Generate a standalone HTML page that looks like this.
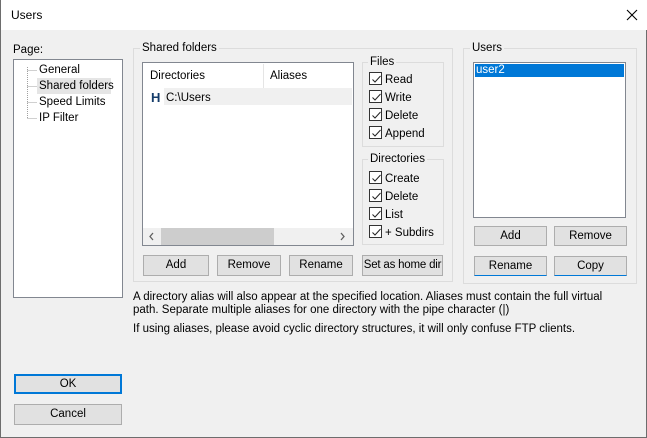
<!DOCTYPE html>
<html><head><style>
*{box-sizing:border-box}
body{margin:0;width:647px;height:438px;overflow:hidden;font-family:"Liberation Sans",sans-serif;font-size:11.5px;color:#000}
#w{position:absolute;left:0;top:0;width:647px;height:438px;background:#f0f0f0;border:1px solid #6d6d6d;border-top:none}
.a{position:absolute;white-space:nowrap}
.t{line-height:14px}
.btn{position:absolute;background:#e1e1e1;border:1px solid #adadad;text-align:center;line-height:19px;white-space:nowrap;overflow:hidden}
.grp{position:absolute;border:1px solid #dcdcdc}
.lbl{position:absolute;background:#f0f0f0;padding:0 2px;line-height:13px}
.cb{position:absolute;width:13px;height:13px;border:1px solid #333;background:#fff}
.cb svg{position:absolute;left:1px;top:1px}
</style></head><body>
<div id="w">
<div class="a" style="left:0;top:0;width:647px;height:30px;background:#fff"></div>
<div class="a t" style="left:10px;top:8px;font-size:12px">Users</div>
<svg class="a" style="left:625px;top:9px" width="12" height="12"><path d="M1 1L11 11M11 1L1 11" stroke="#000" stroke-width="1.1"/></svg>

<div class="a t" style="left:12px;top:43px">Page:</div>
<div class="a" style="left:12px;top:59px;width:110px;height:239px;background:#fff;border:1px solid #828790"></div>
<svg class="a" style="left:26px;top:67px" width="12" height="56"><path d="M0.5 0V51.5M0.5 3.5H10M0.5 19.5H10M0.5 35.5H10M0.5 51.5H10" stroke="#a0a0a0" stroke-dasharray="1 1"/></svg>
<div class="a" style="left:36px;top:78px;width:74px;height:16px;background:#e5e5e5"></div>
<div class="a t" style="left:38px;top:63px">General</div>
<div class="a t" style="left:38px;top:79px">Shared folders</div>
<div class="a t" style="left:38px;top:95px">Speed Limits</div>
<div class="a t" style="left:38px;top:111px">IP Filter</div>

<div class="grp" style="left:132px;top:48px;width:320px;height:234px"></div>
<div class="lbl" style="left:139px;top:42px">Shared folders</div>
<div class="a" style="left:141px;top:62px;width:212px;height:184px;background:#fff;border:1px solid #828790"></div>
<div class="a" style="left:262px;top:64px;width:1px;height:24px;background:#e5e5e5"></div>
<div class="a t" style="left:149px;top:69px">Directories</div>
<div class="a t" style="left:269px;top:69px">Aliases</div>
<div class="a" style="left:163px;top:88px;width:188px;height:17px;background:#f0f0f0"></div>
<div class="a" style="left:150px;top:90px;font-weight:bold;font-size:13px;color:#143c6a;line-height:15px">H</div>
<div class="a t" style="left:165px;top:91px">C:\Users</div>
<div class="a" style="left:142px;top:228px;width:210px;height:17px;background:#f0f0f0"></div>
<div class="a" style="left:160px;top:228px;width:113px;height:17px;background:#cdcdcd"></div>
<svg class="a" style="left:147px;top:232px" width="8" height="9"><path d="M5 1L2 4.5L5 8" stroke="#606060" stroke-width="1.3" fill="none"/></svg>
<svg class="a" style="left:338px;top:232px" width="8" height="9"><path d="M2 1L5 4.5L2 8" stroke="#606060" stroke-width="1.3" fill="none"/></svg>

<div class="btn" style="left:142px;top:255px;width:66px;height:21px">Add</div>
<div class="btn" style="left:216px;top:255px;width:64px;height:21px">Remove</div>
<div class="btn" style="left:288px;top:255px;width:64px;height:21px">Rename</div>
<div class="btn" style="left:361px;top:255px;width:81px;height:21px;letter-spacing:-0.2px">Set as home dir</div>

<div class="grp" style="left:361px;top:62px;width:82px;height:85px"></div>
<div class="lbl" style="left:367px;top:56px">Files</div>
<div class="grp" style="left:361px;top:159px;width:82px;height:86px"></div>
<div class="lbl" style="left:367px;top:153px">Directories</div>

<div class="grp" style="left:462px;top:48px;width:174px;height:236px"></div>
<div class="lbl" style="left:469px;top:42px">Users</div>
<div class="a" style="left:472px;top:62px;width:153px;height:156px;background:#fff;border:1px solid #828790"></div>
<div class="a" style="left:474px;top:64px;width:149px;height:13px;background:#0078d7"></div>
<div class="a" style="left:475px;top:64px;color:#fff;line-height:13px">user2</div>
<div class="btn" style="left:473px;top:226px;width:73px;height:20px">Add</div>
<div class="btn" style="left:553px;top:226px;width:73px;height:20px">Remove</div>
<div class="btn" style="left:473px;top:256px;width:73px;height:20px;border-bottom:1px solid #0078d7">Rename</div>
<div class="btn" style="left:553px;top:256px;width:73px;height:20px;border-bottom:1px solid #0078d7">Copy</div>

<div class="a" style="left:132px;top:291px;line-height:13px;white-space:normal;width:500px">A directory alias will also appear at the specified location. Aliases must contain the full virtual<br>path. Separate multiple aliases for one directory with the pipe character (|)</div>
<div class="a t" style="left:132px;top:322px">If using aliases, please avoid cyclic directory structures, it will only confuse FTP clients.</div>

<div class="btn" style="left:13px;top:374px;width:108px;height:20px;border:2px solid #0078d7;line-height:16px">OK</div>
<div class="btn" style="left:13px;top:404px;width:108px;height:21px">Cancel</div>
</div>
<div style="position:absolute;left:0;top:0">
<div class="cb" style="left:369px;top:72px"><svg width="11" height="11"><path d="M1.5 5.5L4 8L9.5 2" stroke="#222" fill="none"/></svg></div>
<div class="a t" style="left:385px;top:73px">Read</div>
<div class="cb" style="left:369px;top:90px"><svg width="11" height="11"><path d="M1.5 5.5L4 8L9.5 2" stroke="#222" fill="none"/></svg></div>
<div class="a t" style="left:385px;top:91px">Write</div>
<div class="cb" style="left:369px;top:108px"><svg width="11" height="11"><path d="M1.5 5.5L4 8L9.5 2" stroke="#222" fill="none"/></svg></div>
<div class="a t" style="left:385px;top:109px">Delete</div>
<div class="cb" style="left:369px;top:126px"><svg width="11" height="11"><path d="M1.5 5.5L4 8L9.5 2" stroke="#222" fill="none"/></svg></div>
<div class="a t" style="left:385px;top:127px">Append</div>
<div class="cb" style="left:369px;top:171px"><svg width="11" height="11"><path d="M1.5 5.5L4 8L9.5 2" stroke="#222" fill="none"/></svg></div>
<div class="a t" style="left:385px;top:172px">Create</div>
<div class="cb" style="left:369px;top:189px"><svg width="11" height="11"><path d="M1.5 5.5L4 8L9.5 2" stroke="#222" fill="none"/></svg></div>
<div class="a t" style="left:385px;top:190px">Delete</div>
<div class="cb" style="left:369px;top:207px"><svg width="11" height="11"><path d="M1.5 5.5L4 8L9.5 2" stroke="#222" fill="none"/></svg></div>
<div class="a t" style="left:385px;top:208px">List</div>
<div class="cb" style="left:369px;top:225px"><svg width="11" height="11"><path d="M1.5 5.5L4 8L9.5 2" stroke="#222" fill="none"/></svg></div>
<div class="a t" style="left:385px;top:226px">+ Subdirs</div>
</div>
</body></html>
